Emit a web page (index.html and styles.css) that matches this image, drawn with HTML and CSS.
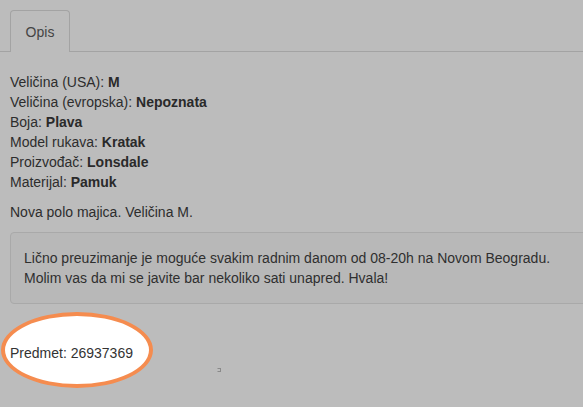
FILE: index.html
```html
<!DOCTYPE html>
<html>
<head>
<meta charset="utf-8">
<link rel="stylesheet" href="styles.css">
</head>
<body>
<div class="page">
  <div class="tabs">
    <div class="tab">Opis</div>
  </div>
  <div class="content">
    <div class="specs">
      <div>Veličina (USA): <b>M</b></div>
      <div>Veličina (evropska): <b>Nepoznata</b></div>
      <div>Boja: <b>Plava</b></div>
      <div>Model rukava: <b>Kratak</b></div>
      <div>Proizvođač: <b>Lonsdale</b></div>
      <div>Materijal: <b>Pamuk</b></div>
    </div>
    <p class="desc">Nova polo majica. Veličina M.</p>
    <div class="well">Lično preuzimanje je moguće svakim radnim danom od 08-20h na Novom Beogradu.<br>Molim vas da mi se javite bar nekoliko sati unapred. Hvala!</div>
    <div class="subject">
      <span class="oval"></span>
      <span class="subject-text">Predmet: 26937369</span>
      <span class="dot"></span>
    </div>
  </div>
</div>
</body>
</html>
```

FILE: styles.css
```css
html, body {
  margin: 0;
  padding: 0;
  background: #bcbcbc;
  overflow: hidden;
}
.page {
  width: 583px;
  height: 407px;
  font-family: "Liberation Sans", Arial, sans-serif;
  font-size: 14px;
  line-height: 20px;
  color: #2d2d2d;
  overflow: hidden;
}
.tabs {
  padding-top: 10px;
  padding-left: 10px;
  border-bottom: 1px solid #a3a3a3;
  height: 41px;
  display: flex;
}
.tab {
  box-sizing: border-box;
  width: 60px;
  height: 42px;
  margin-bottom: -1px;
  padding-top: 1px;
  border: 1px solid #a3a3a3;
  border-bottom: none;
  border-radius: 4px 4px 0 0;
  background: #bcbcbc;
  color: #444;
  display: flex;
  align-items: center;
  justify-content: center;
}
.content {
  padding: 20px 0 0 10px;
}
.specs b {
  font-weight: bold;
  color: #2a2a2a;
}
.desc {
  margin: 10px 0 10px 0;
}
.well {
  width: 620px;
  border: 1px solid #a9a9a9;
  border-radius: 4px;
  background: #b8b8b8;
  padding: 15px 13px 15px 13px;
  color: #2f2f2f;
}
.subject {
  position: relative;
  margin-top: 39px;
  height: 20px;
}
.oval {
  position: absolute;
  left: -9px;
  top: -31px;
  width: 144px;
  height: 68px;
  border: 4px solid #f58c4f;
  border-radius: 50%;
  background: #ffffff;
}
.subject-text {
  position: relative;
  color: #333;
}
.dot {
  position: absolute;
  left: 207px;
  top: 25px;
  width: 2px;
  height: 2px;
  border: 1px solid #8a8a8a;
  border-left-color: transparent;
}
```
